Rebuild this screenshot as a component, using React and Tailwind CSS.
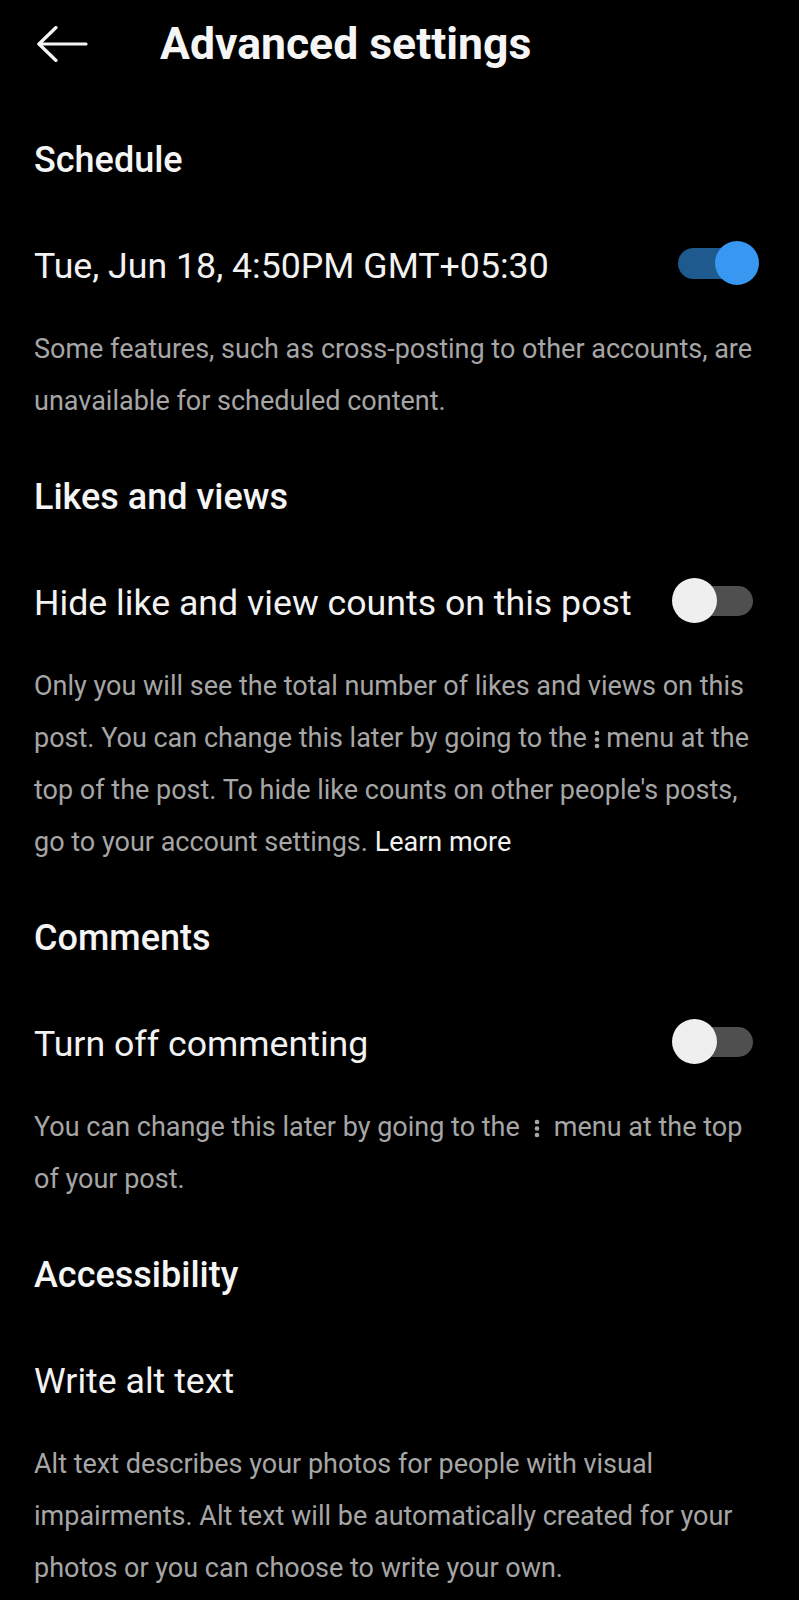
import React from 'react';

function Dots({ wide }) {
    return (
        <svg
            viewBox="0 0 6 20"
            className={wide ? "inline-block w-[6px] h-[20px] mx-[14px] align-[-2px]" : "inline-block w-[6px] h-[20px] align-[-2px]"}
        >
            <circle cx="3" cy="4" r="2.3" fill="#a8a8a8" />
            <circle cx="3" cy="10.5" r="2.3" fill="#a8a8a8" />
            <circle cx="3" cy="17" r="2.3" fill="#a8a8a8" />
        </svg>
    );
}

function Toggle({ on }) {
    if (on) {
        return (
            <div className="relative w-[81px] h-[44px] mr-[3px] mb-[8px] shrink-0">
                <div className="absolute left-0 top-[7px] w-[70px] h-[31px] rounded-full bg-[#1e5a8e]" />
                <div className="absolute right-0 top-0 w-[44px] h-[44px] rounded-full bg-[#3897f0]" />
            </div>
        );
    }
    return (
        <div className="relative w-[81px] h-[45px] mr-[9px] mb-[8px] shrink-0">
            <div className="absolute right-0 top-[8px] w-[70px] h-[30px] rounded-full bg-[#4f4f4f]" />
            <div className="absolute left-0 top-0 w-[45px] h-[45px] rounded-full bg-[#efefef]" />
        </div>
    );
}

function Section({ title, label, toggle, first, children }) {
    return (
        <section>
            <div className={(first ? "mt-[40px]" : "mt-[38px]") + " h-[64px] flex items-center text-[36px] font-medium text-[#f5f5f5]"}>
                {title}
            </div>
            <div className="mt-[43px] h-[64px] flex items-center justify-between">
                <span className="text-[35.7px] text-[#f2f2f2]">{label}</span>
                {toggle !== undefined && <Toggle on={toggle} />}
            </div>
            <p className="mt-[24px] text-[27px] leading-[52px] text-[#a6a6a6]">{children}</p>
        </section>
    );
}

export default function App() {
    return (
        <div className="min-h-[1600px] w-full bg-black font-[Roboto,sans-serif] antialiased">
            <header className="h-[88px] flex items-center pl-[37px]">
                <svg viewBox="0 0 51 36" className="w-[51px] h-[36px]" fill="none" stroke="#f5f5f5" strokeWidth="3.2" strokeLinecap="round" strokeLinejoin="round">
                    <path d="M49 18H2" />
                    <path d="M19 1.5L2 18L19 34.5" />
                </svg>
                <h1 className="ml-[72px] text-[44.5px] font-bold text-[#f5f5f5]">Advanced settings</h1>
            </header>

            <main className="pl-[34px] pr-[37px]">
                <Section first title="Schedule" label="Tue, Jun 18, 4:50PM GMT+05:30" toggle={true}>
                    Some features, such as cross-posting to other accounts, are unavailable for scheduled content.
                </Section>

                <Section title="Likes and views" label="Hide like and view counts on this post" toggle={false}>
                    Only you will see the total number of likes and views on this post. You can change this later by going to the <Dots /> menu at the top of the post. To hide like counts on other people's posts, go to your account settings.{' '}
                    <span className="text-[#f2f2f2]">Learn more</span>
                </Section>

                <Section title="Comments" label="Turn off commenting" toggle={false}>
                    You can change this later by going to the<Dots wide />menu at the top of your post.
                </Section>

                <Section title="Accessibility" label="Write alt text">
                    Alt text describes your photos for people with visual impairments. Alt text will be automatically created for your photos or you can choose to write your own.
                </Section>
            </main>
        </div>
    );
}
